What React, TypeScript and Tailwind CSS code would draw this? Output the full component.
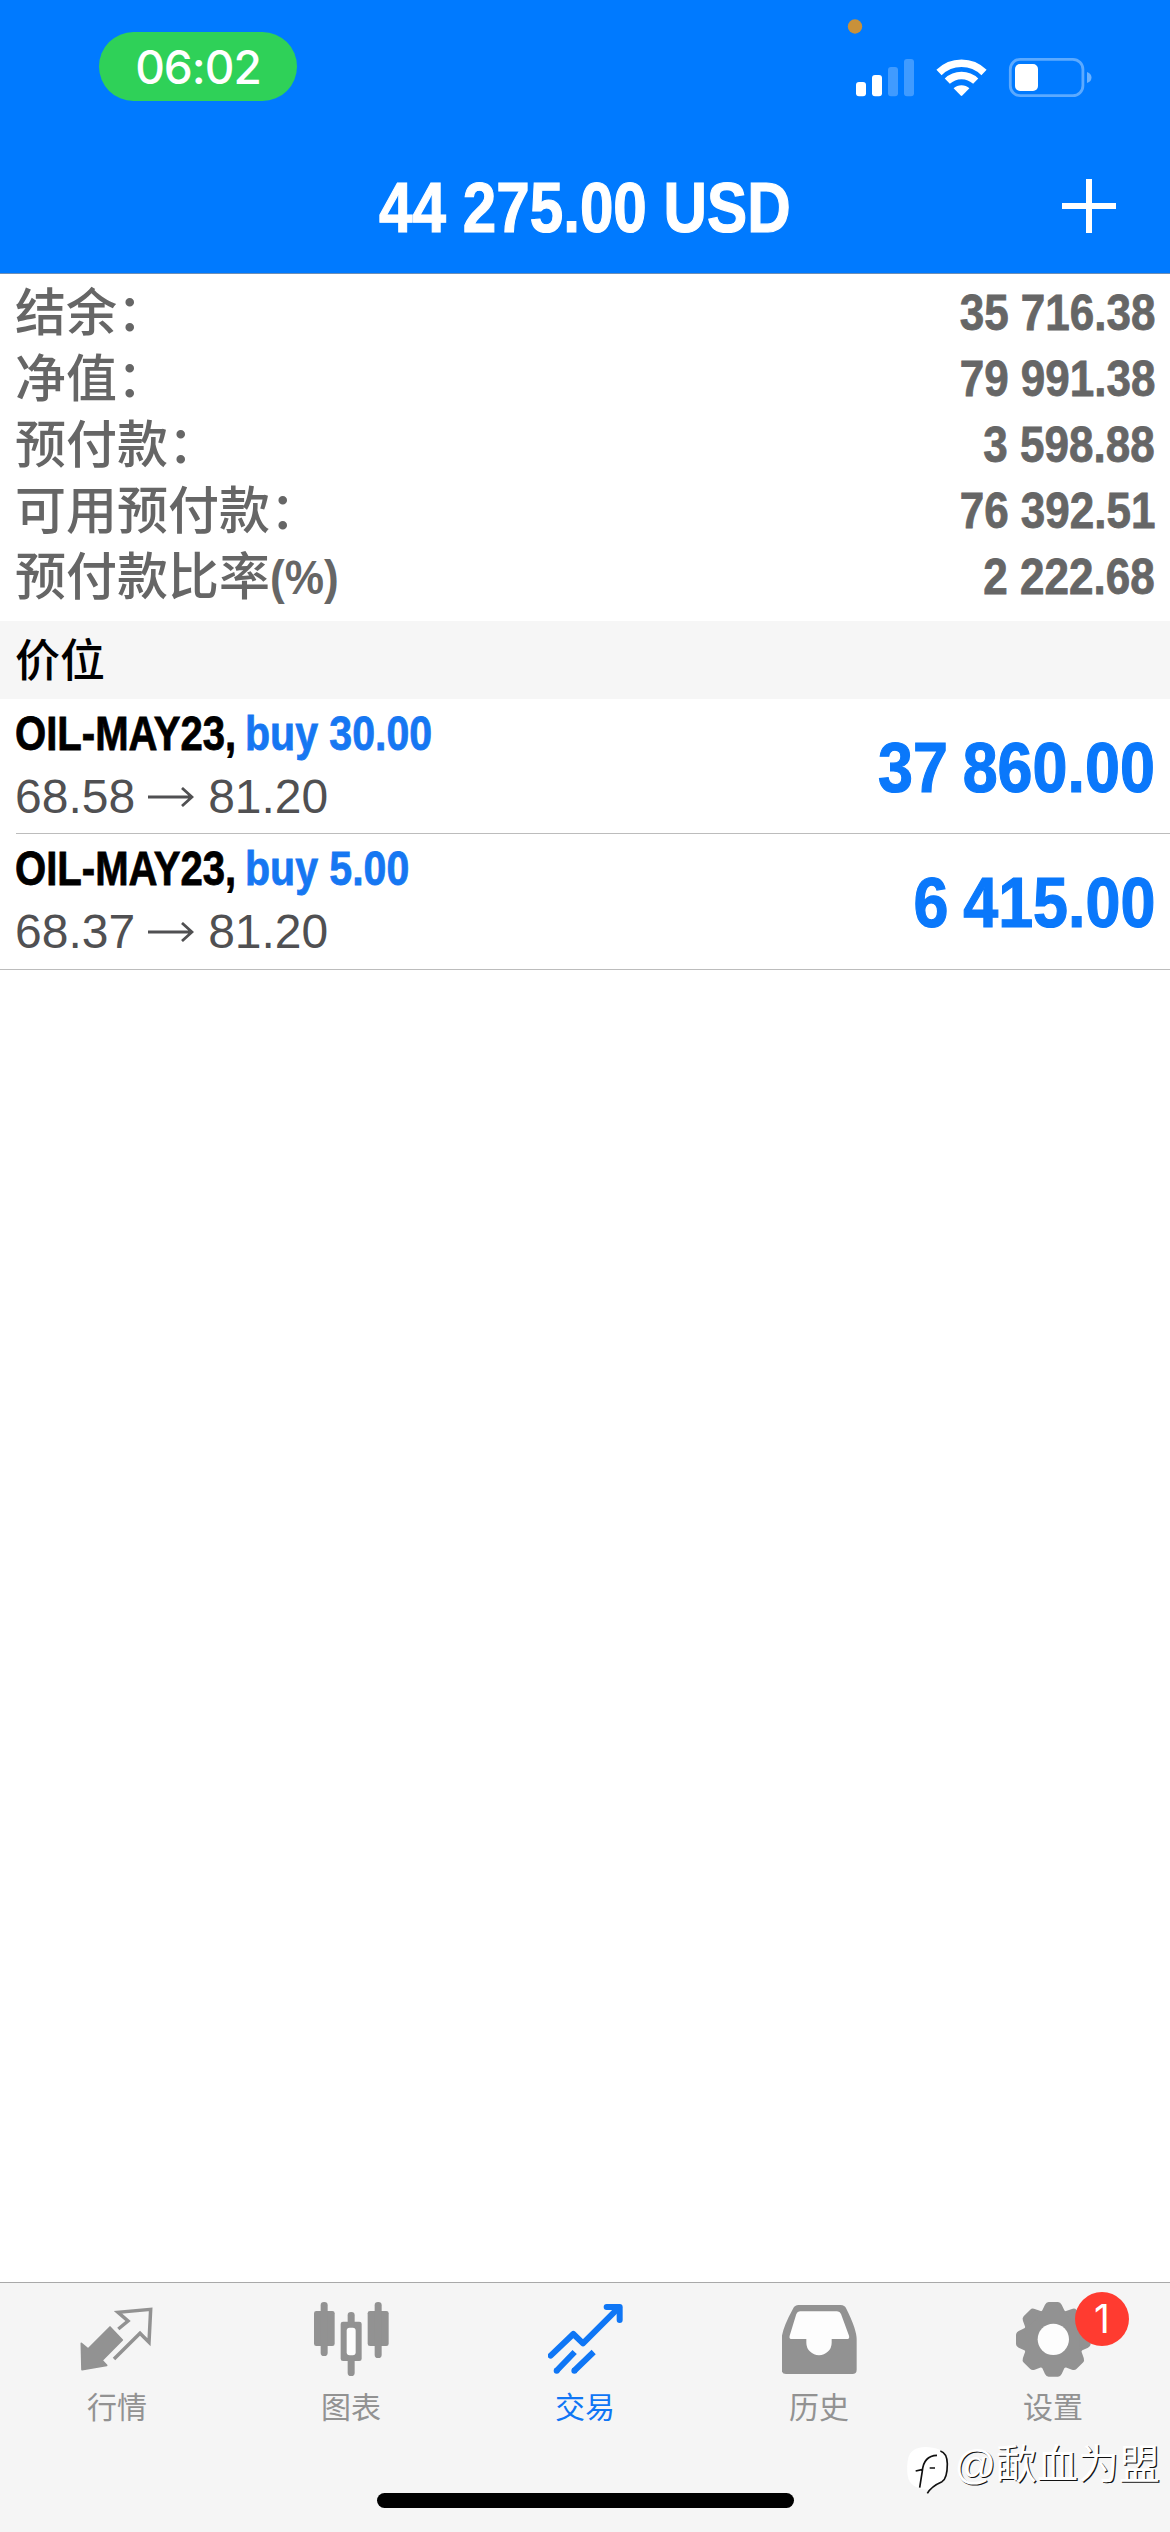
import type { ReactNode } from "react";

const cjk = "font-['Liberation_Sans','Noto_Sans_CJK_SC',sans-serif]";

const summary = [
    { label: "结余：", value: "35 716.38" },
    { label: "净值：", value: "79 991.38" },
    { label: "预付款：", value: "3 598.88" },
    { label: "可用预付款：", value: "76 392.51" },
    { label: "预付款比率", suffix: "(%)", value: "2 222.68" },
];

const positions = [
    { symbol: "OIL-MAY23,", side: "buy 30.00", open: "68.58", current: "81.20", profit: "37 860.00" },
    { symbol: "OIL-MAY23,", side: "buy 5.00", open: "68.37", current: "81.20", profit: "6 415.00" },
];

function StatusIcons() {
    return (
        <svg className="h-[100px] w-[260px]" viewBox="840 0 260 100" fill="#fff">
            <circle cx="855" cy="26.5" r="7.2" fill="#c8913a" />
            <rect x="856" y="82" width="10" height="14.3" rx="3" />
            <rect x="872" y="75" width="10" height="21.3" rx="3" />
            <rect x="888" y="67" width="10" height="29.3" rx="3" opacity=".25" />
            <rect x="904" y="59" width="10" height="37.3" rx="3" opacity=".25" />
            <g fill="none" stroke="#fff" strokeWidth="7.4">
                <path d="M939 72.5a32 32 0 0 1 45 0" />
                <path d="M947.3 81.2a20.5 20.5 0 0 1 28.4 0" />
            </g>
            <path d="M953.6 88.3a11.5 11.5 0 0 1 15.8 0l-7.1 7.3q-.8.8-1.6 0z" />
            <rect x="1010.3" y="59.3" width="72.6" height="36.4" rx="10" fill="none" stroke="#fff" strokeOpacity=".36" strokeWidth="2.8" />
            <rect x="1015" y="64" width="23" height="27" rx="5" />
            <path d="M1087 72q4.500 1.500 4.500 5.500t-4.500 5.500z" opacity=".42" />
        </svg>
    );
}

function QuotesIcon() {
    return (
        <svg className="size-[75px]" viewBox="0 0 225 225" fill="currentColor" stroke="currentColor" strokeLinejoin="round">
            <path d="M4 124l20 17 66-66 37 39-61 61 14 15-74 13z" strokeWidth="5" />
            <path d="M115 81l29-24-30-26 98-9-5 99-27-27-78 77" fill="none" strokeWidth="10.500" strokeLinejoin="miter" />
        </svg>
    );
}

function ChartIcon() {
    return (
        <svg className="size-[75px]" viewBox="0 0 225 225" fill="currentColor">
            <rect x="0" y="27" width="62" height="105" rx="7" />
            <rect x="20" y="0" width="21" height="162" rx="10" />
            <rect x="80" y="59" width="63" height="118" rx="7" />
            <rect x="101" y="30" width="21" height="192" rx="10" />
            <rect x="98" y="77" width="27" height="83" rx="9" fill="#fdfdfd" />
            <rect x="161" y="27" width="63" height="105" rx="7" />
            <rect x="182" y="0" width="21" height="168" rx="10" />
        </svg>
    );
}

function TradeIcon() {
    return (
        <svg className="size-[75px]" viewBox="0 0 225 225" fill="none" stroke="currentColor" strokeWidth="18">
            <path d="M8 161l68-65 29 28L213 16" strokeLinecap="round" strokeLinejoin="round" />
            <path d="M176 15h39v39" strokeLinecap="round" strokeLinejoin="round" />
            <path d="M80 150l-55 57M137 150l-59 57" />
            <path d="M26 206h.1M79 206h.1" strokeLinecap="round" />
        </svg>
    );
}

function HistoryIcon() {
    return (
        <svg className="size-[75px]" viewBox="0 0 225 225" fill="currentColor">
            <path d="M50 9H176q12 0 17 11Q224 82 224 112V203q0 13-13 13H12Q-1 216-1 203V112Q-1 82 33 20 38 9 50 9z" />
            <path d="M54 28H165q9 0 12 8l24 65q3 10-7 10H149V122a38 38 0 0 1-76 0V111H30q-10 0-7-10L43 36q3-8 11-8z" fill="#fdfdfd" />
        </svg>
    );
}

function SettingsIcon() {
    return (
        <svg className="size-[75px]" viewBox="0 0 225 225" fill="currentColor">
            <circle cx="112" cy="112" r="90" />
            {[0, 45, 90, 135, 180, 225, 270, 315].map((angle) => (
                <path
                    key={angle}
                    d="M98 0h28q7 0 11 8l8 17q3 6 12 8H67q9-2 12-8l8-17q4-8 11-8z"
                    transform={`rotate(${angle} 112 112)`}
                />
            ))}
            <circle cx="112" cy="112" r="47" fill="#fdfdfd" />
        </svg>
    );
}

function Tab({ label, active, badge, children }: { label: string; active?: boolean; badge?: string; children: ReactNode }) {
    return (
        <div className={`relative flex flex-1 flex-col items-center pt-[19px] ${active ? "text-[#0f76f5]" : "text-[#929292]"}`}>
            {children}
            <span className="mt-[9px] text-[30px] leading-[44px]">{label}</span>
            {badge && (
                <span className="absolute top-[9px] left-[139px] flex size-[54px] items-center justify-center rounded-full bg-[#ff3b30] font-['Inter',sans-serif] text-[39px] text-white">
                    {badge}
                </span>
            )}
        </div>
    );
}

export default function App() {
    return (
        <div className={`relative flex h-[2532px] w-[1170px] flex-col overflow-hidden bg-white ${cjk}`}>
            <header className="h-[274px] border-b border-[#6f8fb5] bg-[#007aff] text-white">
                <div className="flex h-[139px] items-start justify-between pr-[70px] pl-[99px]">
                    <div className="mt-[32px] flex h-[69px] w-[198px] items-center justify-center rounded-full bg-[#2fd158] pt-px font-['Inter',sans-serif] text-[46px] font-medium tracking-[-1px]">
                        06:02
                    </div>
                    <StatusIcons />
                </div>
                <div className="grid h-[134px] grid-cols-[1fr_auto_1fr] items-center">
                    <span />
                    <h1 className="mt-[4px] w-[412px] origin-left scale-x-[0.848] text-[71px] font-bold whitespace-nowrap [-webkit-text-stroke:1.2px_#fff]">
                        44 275.00 USD
                    </h1>
                    <svg className="mr-[54px] size-[54px] justify-self-end" viewBox="0 0 54 54" stroke="#fff" strokeWidth="6">
                        <path d="M0 27h54M27 0v54" />
                    </svg>
                </div>
            </header>

            <section className="h-[347px] pt-[7px] text-[#666]">
                {summary.map((row) => (
                    <div key={row.label} className="flex h-[66px] items-center justify-between pr-[15px] pl-[15px]">
                        <span className="flex text-[51px] leading-[66px] font-medium">
                            {row.label}
                            {row.suffix && <span className="origin-left scale-x-[0.92] text-[48px] font-bold">{row.suffix}</span>}
                        </span>
                        <span className="mb-[2px] origin-right scale-x-[0.88] text-[50px] leading-[66px] font-bold [-webkit-text-stroke:0.8px_#666]">
                            {row.value}
                        </span>
                    </div>
                ))}
            </section>

            <h2 className="h-[78px] bg-[#f6f6f6] pt-[3px] pl-[15px] text-[45px] leading-[76px] font-medium text-black">价位</h2>

            <ul>
                {positions.map((p, i) => (
                    <li key={p.side} className={i === positions.length - 1 ? "border-b border-[#bcbcbc]" : ""}>
                        <div className={`flex h-[135px] items-center justify-between pr-[15px] ${i === 0 ? "ml-[16px] border-b border-[#bcbcbc]" : "pl-[16px]"}`}>
                            <div className="-ml-px flex h-full flex-col">
                                <div className="mt-[3px] flex h-[64px] items-center text-[48px] font-bold whitespace-nowrap">
                                    <span className="w-[230px] origin-left scale-x-[0.835] text-black [-webkit-text-stroke:0.8px_#000]">{p.symbol}</span>
                                    <span className="origin-left scale-x-[0.855] text-[#1677f2] [-webkit-text-stroke:0.8px_#1677f2]">{p.side}</span>
                                </div>
                                <div className="flex h-[62px] items-center text-[48px] text-[#505052]">
                                    {p.open}
                                    <svg className="mr-[14px] ml-[13px] h-[20px] w-[46px]" viewBox="0 0 46 20" fill="none" stroke="currentColor" strokeWidth="2.800">
                                        <path d="M0 10h44M34 1l10 9-10 9" />
                                    </svg>
                                    {p.current}
                                </div>
                            </div>
                            <span className="mt-[4px] origin-right scale-x-[0.885] text-[71px] font-bold text-[#0a78fb] [word-spacing:-3px] [-webkit-text-stroke:1.2px_#0a78fb]">
                                {p.profit}
                            </span>
                        </div>
                    </li>
                ))}
            </ul>

            <footer className="mt-auto flex h-[250px] flex-col items-center border-t border-[#a9a9a9] bg-[#f5f5f5]">
                <nav className="flex w-full">
                    <Tab label="行情"><QuotesIcon /></Tab>
                    <Tab label="图表"><ChartIcon /></Tab>
                    <Tab label="交易" active><TradeIcon /></Tab>
                    <Tab label="历史"><HistoryIcon /></Tab>
                    <Tab label="设置" badge="1"><SettingsIcon /></Tab>
                </nav>
                <div className="mt-auto mb-[24px] h-[15px] w-[417px] rounded-full bg-black" />
            </footer>

            {/* author mark over the tab bar */}
            <div className="absolute top-[2439px] right-[10px] flex items-center text-[41px] leading-[52px] text-white [text-shadow:1.2px_1.2px_0_#111]">
                <svg className="h-[52px] w-[50px]" viewBox="75 504 150 156" fill="none" overflow="visible">
                    <path d="M88 560q8-30 50-32 52 0 66 30 6 60-16 78-24 10-36 20-60-2-66-42-4-30 2-54z" fill="#fff" />
                    <path d="M184 540q20 6 21 38 0 44-16 54-32 14-44 35" stroke="#111" strokeWidth="5" />
                    <path d="M122 650l8-50q4-46 44-47M110 600l22-5M152 591h16" stroke="#111" strokeWidth="5" />
                </svg>
                @歃血为盟
            </div>
        </div>
    );
}
